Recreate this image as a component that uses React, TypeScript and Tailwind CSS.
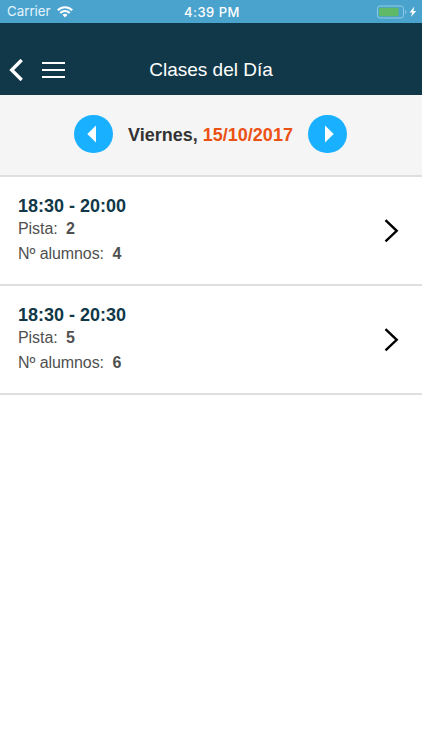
type Clase = {
  id: number;
  horario: string;
  pista: number;
  alumnos: number;
};

const CLASES: Clase[] = [
  { id: 1, horario: "18:30 - 20:00", pista: 2, alumnos: 4 },
  { id: 2, horario: "18:30 - 20:30", pista: 5, alumnos: 6 },
];

function StatusBar() {
  return (
    <div className="grid h-[23px] grid-cols-3 items-center bg-[#4aa3cd] pt-px pr-[5px] pl-[7px] font-['Inter',sans-serif] text-[13px] leading-none text-white">
      <div className="flex items-center gap-[7px]">
        <span className="w-[43px] text-[13.3px] whitespace-nowrap text-[#e4f3fb]">Carrier</span>
        <svg width="16" height="12" viewBox="0 0 16 12" fill="none" stroke="white" strokeWidth="2.2">
          <path d="M0.8 4.3C4.8 0.2 11.2 0.2 15.2 4.3" />
          <path d="M3.3 7C5.9 4.3 10.1 4.3 12.7 7" />
          <path d="M8 11.4L5.5 8.8C6.9 7.5 9.1 7.5 10.5 8.8Z" fill="white" stroke="none" />
        </svg>
      </div>
      <span className="text-center font-medium tracking-[0.5px] whitespace-nowrap">4:39 PM</span>
      <div className="flex items-center justify-end">
        <svg width="40" height="14" viewBox="0 0 40 14">
          <rect x="0.5" y="1" width="26" height="12" rx="2.5" fill="none" stroke="#8fcbe6" />
          <rect x="2" y="2.7" width="19.5" height="8.6" rx="0.8" fill="#60b966" />
          <path d="M28.2 5Q29.5 5.3 29.5 7Q29.5 8.7 28.2 9Z" fill="#8fcbe6" />
          <path d="M37.3 1.6L32.6 7.6H35.2L34 12L39.2 6H36.4Z" fill="white" />
        </svg>
      </div>
    </div>
  );
}

function Header() {
  return (
    <header className="grid h-[71.5px] grid-cols-[80px_1fr_80px] items-center bg-[#113848] pt-[22px] text-white">
      <div className="flex items-center gap-[19px] pl-[9px]">
        <button aria-label="Volver">
          <svg width="14" height="22" viewBox="0 0 14 22" fill="none" stroke="white" strokeWidth="3.4">
            <path d="M12.7 1L2.7 11L12.7 21" />
          </svg>
        </button>
        <button aria-label="Menú" className="flex w-[23px] flex-col gap-[5px]">
          <span className="h-[2px] bg-white" />
          <span className="h-[2px] bg-white" />
          <span className="h-[2px] bg-white" />
        </button>
      </div>
      <h1 className="text-center text-[19px] leading-6">Clases del Día</h1>
    </header>
  );
}

function DayPicker() {
  return (
    <div className="flex h-[82.5px] items-center justify-center gap-[15.5px] border-b-2 border-[#dfdfdf] bg-[#f5f5f5] pr-px pb-[2px] text-lg font-bold">
      <button aria-label="Día anterior" className="flex size-[38.5px] items-center justify-center rounded-full bg-[#19b0ff] pr-[3px]">
        <svg width="9" height="18" viewBox="0 0 9 18" fill="white">
          <path d="M9 0.5V17.5L0.3 9Z" />
        </svg>
      </button>
      <p className="pt-[2px] text-[#333333]">
        Viernes, <span className="text-[#ec5114]">15/10/2017</span>
      </p>
      <button aria-label="Día siguiente" className="flex size-[38.5px] items-center justify-center rounded-full bg-[#19b0ff] pl-[3px]">
        <svg width="9" height="18" viewBox="0 0 9 18" fill="white">
          <path d="M0 0.5V17.5L8.7 9Z" />
        </svg>
      </button>
    </div>
  );
}

export default function App() {
  return (
    <div className="min-h-screen bg-white font-['Liberation_Sans',Arial,sans-serif]">
      <StatusBar />
      <Header />
      <DayPicker />
      <ul>
        {CLASES.map((c) => (
          <li
            key={c.id}
            className="flex h-[109px] items-center justify-between border-b-2 border-[#dfdfdf] pr-[23px] pl-[18px]"
          >
            <div className="pb-[2px] text-base leading-[25px] tracking-[-0.07px] text-[#505050]">
              <h2 className="pt-[2px] text-lg leading-5 font-bold tracking-normal text-[#113848]">{c.horario}</h2>
              <p>
                Pista: <strong className="ml-1">{c.pista}</strong>
              </p>
              <p>
                Nº alumnos: <strong className="ml-1">{c.alumnos}</strong>
              </p>
            </div>
            <svg width="15" height="24" viewBox="0 0 15 24" fill="none" stroke="black" strokeWidth="2.4">
              <path d="M1.5 1.2L12.7 11.8L1.5 22.4" />
            </svg>
          </li>
        ))}
      </ul>
    </div>
  );
}
